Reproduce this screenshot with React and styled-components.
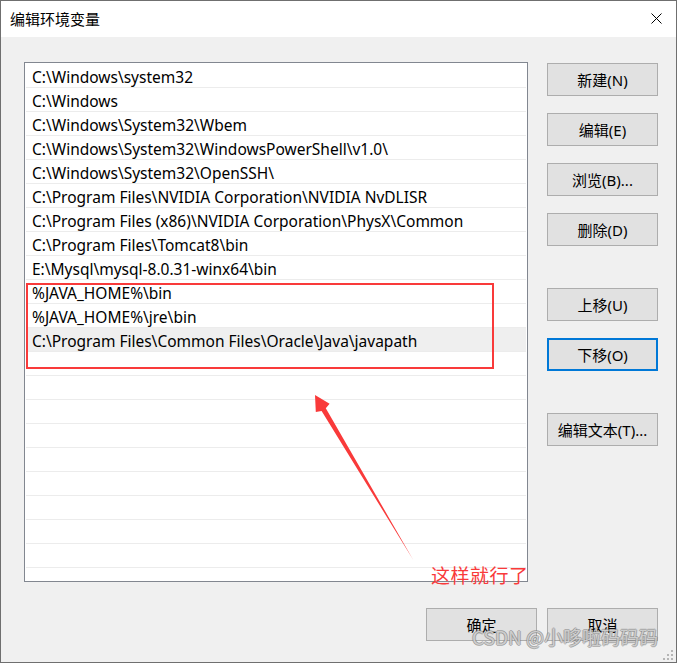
import React from 'react';
import styled, { createGlobalStyle } from 'styled-components';

const GlobalStyle = createGlobalStyle`
  html, body {
    margin: 0;
    padding: 0;
    background: #f0f0f0;
  }
  * {
    box-sizing: border-box;
  }
`;

const paths = [
  'C:\\Windows\\system32',
  'C:\\Windows',
  'C:\\Windows\\System32\\Wbem',
  'C:\\Windows\\System32\\WindowsPowerShell\\v1.0\\',
  'C:\\Windows\\System32\\OpenSSH\\',
  'C:\\Program Files\\NVIDIA Corporation\\NVIDIA NvDLISR',
  'C:\\Program Files (x86)\\NVIDIA Corporation\\PhysX\\Common',
  'C:\\Program Files\\Tomcat8\\bin',
  'E:\\Mysql\\mysql-8.0.31-winx64\\bin',
  '%JAVA_HOME%\\bin',
  '%JAVA_HOME%\\jre\\bin',
  'C:\\Program Files\\Common Files\\Oracle\\Java\\javapath',
];

const EMPTY_ROWS = 10;

const sideButtons = [
  { label: '新建(N)', gap: 1 },
  { label: '编辑(E)', gap: 17 },
  { label: '浏览(B)...', gap: 17 },
  { label: '删除(D)', gap: 17 },
  { label: '上移(U)', gap: 42 },
  { label: '下移(O)', gap: 17, focused: true },
  { label: '编辑文本(T)...', gap: 42 },
];

export default function App() {
  return (
    <>
      <GlobalStyle />
      <Window>
        <TitleBar>
          <Title>编辑环境变量</Title>
          <CloseButton>
            <svg width="11" height="11" viewBox="0 0 11 11">
              <path d="M0.5 0.5 L10.5 10.5 M10.5 0.5 L0.5 10.5" stroke="#000" strokeWidth="1" />
            </svg>
          </CloseButton>
        </TitleBar>

        <Body>
          <Main>
            <ListBox>
              {paths.map((p, i) => (
                <Row key={p} $selected={i === paths.length - 1}>
                  {p}
                </Row>
              ))}
              {Array.from({ length: EMPTY_ROWS }).map((_, i) => (
                <Row key={'empty' + i} />
              ))}
              <Highlight />
            </ListBox>

            <SideColumn>
              {sideButtons.map((b) => (
                <Button key={b.label} $gap={b.gap} $focused={b.focused}>
                  {b.label}
                </Button>
              ))}
            </SideColumn>
          </Main>

          <Footer>
            <Button>确定</Button>
            <Button>取消</Button>
          </Footer>
        </Body>

        {/* red annotation arrow */}
        <Overlay width="677" height="663" viewBox="0 0 677 663">
          <polygon
            points="315,395 329.6,403.8 325.8,408.3 413.3,560 321.6,410.9 315.8,412"
            fill="#f93a3a"
          />
        </Overlay>
        <Note>这样就行了</Note>
        <Watermark>CSDN @小哆啦码码码</Watermark>
        <Grip width="10" height="10" viewBox="0 0 10 10">
          <rect x="8" y="0" width="2" height="2" fill="#b5b5b5" />
          <rect x="4" y="4" width="2" height="2" fill="#b5b5b5" />
          <rect x="8" y="4" width="2" height="2" fill="#b5b5b5" />
          <rect x="0" y="8" width="2" height="2" fill="#b5b5b5" />
          <rect x="4" y="8" width="2" height="2" fill="#b5b5b5" />
          <rect x="8" y="8" width="2" height="2" fill="#b5b5b5" />
        </Grip>
      </Window>
    </>
  );
}

const Window = styled.div`
  position: relative;
  width: 677px;
  height: 663px;
  border: 1px solid #6f6f6f;
  background: #f0f0f0;
  display: flex;
  flex-direction: column;
  overflow: hidden;
  font-family: 'Noto Sans', 'Noto Sans CJK SC', sans-serif;
  color: #000;
`;

const TitleBar = styled.div`
  height: 36px;
  background: #fff;
  display: flex;
  align-items: center;
  justify-content: space-between;
  padding: 0 14px 0 9px;
`;

const Title = styled.div`
  font-family: 'Noto Sans CJK SC', sans-serif;
  font-size: 15px;
  line-height: 20px;
  margin-top: -1px;
`;

const CloseButton = styled.div`
  width: 11px;
  height: 11px;
  display: flex;
  margin-top: -2px;
`;

const Body = styled.div`
  flex: 1;
  display: flex;
  flex-direction: column;
  padding: 25px 18px 0 23px;
`;

const Main = styled.div`
  display: flex;
  gap: 19px;
`;

const ListBox = styled.div`
  position: relative;
  width: 504px;
  height: 520px;
  border: 1px solid #828790;
  background: #fff;
  padding: 1px 1px 0;
  overflow: hidden;
`;

const Row = styled.div`
  height: 24px;
  line-height: 22px;
  padding: 2px 0 0 6px;
  font-size: 15.5px;
  white-space: nowrap;
  border-bottom: 1px solid #ececec;
  background: ${(p) => (p.$selected ? '#efefef' : 'transparent')};
`;

const Highlight = styled.div`
  position: absolute;
  left: 1px;
  top: 220px;
  width: 468px;
  height: 86px;
  border: 2px solid #f93a3a;
`;

const SideColumn = styled.div`
  display: flex;
  flex-direction: column;
`;

const Button = styled.button`
  width: 111px;
  height: 33px;
  margin-top: ${(p) => (p.$gap ? p.$gap + 'px' : '0')};
  background: #e1e1e1;
  border: ${(p) => (p.$focused ? '2px solid #0078d7' : '1px solid #adadad')};
  font-family: 'Noto Sans', 'Noto Sans CJK SC', sans-serif;
  font-size: 15px;
  color: #000;
  padding: 0;
  display: flex;
  align-items: center;
  justify-content: center;
`;

const Footer = styled.div`
  display: flex;
  justify-content: flex-end;
  gap: 10px;
  margin-top: 26px;
`;

const Overlay = styled.svg`
  position: absolute;
  left: -1px;
  top: -1px;
  pointer-events: none;
`;

const Note = styled.div`
  position: absolute;
  left: 430px;
  top: 563px;
  font-family: 'Noto Sans CJK SC', sans-serif;
  font-size: 19px;
  line-height: 22px;
  color: #f93a3a;
  letter-spacing: 0.5px;
`;

const Watermark = styled.div`
  position: absolute;
  left: 471px;
  top: 625px;
  font-family: 'Noto Sans CJK SC', sans-serif;
  font-size: 19px;
  line-height: 22px;
  color: rgba(215, 215, 215, 0.9);
  text-shadow: -1px 0 rgba(120, 120, 120, 0.5), 1px 0 rgba(120, 120, 120, 0.5),
    0 1px rgba(120, 120, 120, 0.5), 0 -1px rgba(120, 120, 120, 0.5);
  white-space: nowrap;
`;

const Grip = styled.svg`
  position: absolute;
  right: 3px;
  bottom: 2px;
`;
